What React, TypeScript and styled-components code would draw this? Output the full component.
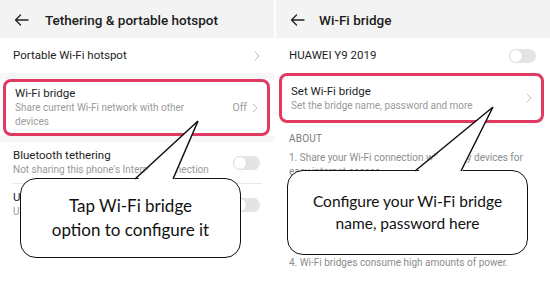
import React from "react";
import styled, { createGlobalStyle } from "styled-components";

const GlobalStyle = createGlobalStyle`
  html, body {
    margin: 0;
    padding: 0;
    background: #fff;
  }
  body {
    font-family: Roboto, "Liberation Sans", sans-serif;
    width: 550px;
    height: 284px;
    overflow: hidden;
  }
`;

const Screen = styled.div`
  display: flex;
  gap: 2px;
  width: 550px;
  height: 284px;
  background: #fff;
`;

const Panel = styled.div<{ width: number }>`
  position: relative;
  width: ${({ width }) => width}px;
  height: 284px;
  overflow: hidden;
  background: #fff;
  display: flex;
  flex-direction: column;
`;

const Header = styled.div<{ indent: number }>`
  height: 38px;
  flex-shrink: 0;
  display: flex;
  align-items: center;
  gap: ${({ indent }) => indent}px;
  padding: 2px 0 0 14px;
  box-sizing: border-box;
  background: #f3f3f3;
  font-size: 13.5px;
  font-weight: 500;
  color: #1c1c1c;
`;

const Row = styled.div<{ height: number }>`
  height: ${({ height }) => height}px;
  display: flex;
  align-items: center;
  justify-content: space-between;
  padding: 0 14px 0 13px;
  flex-shrink: 0;
`;

const Gap = styled.div<{ height: number }>`
  height: ${({ height }) => height}px;
  flex-shrink: 0;
  background: #f6f6f6;
`;

const Highlight = styled.div<{ height: number; side: number }>`
  height: ${({ height }) => height}px;
  margin: 0 ${({ side }) => side}px 0 3px;
  border: 3px solid #e13a62;
  border-radius: 8px;
  box-sizing: border-box;
  display: flex;
  align-items: center;
  justify-content: space-between;
  padding: 0 9px 0 9px;
  flex-shrink: 0;
  background: #fff;
`;

const Texts = styled.div<{ width?: number }>`
  display: flex;
  flex-direction: column;
  ${({ width }) => (width ? `width: ${width}px;` : "")}
`;

const Title = styled.div`
  font-size: 11.5px;
  color: #1e1e1e;
  line-height: 15px;
`;

const Sub = styled.div`
  font-size: 10px;
  color: #9a9a9a;
  line-height: 14px;
`;

const Value = styled.div`
  display: flex;
  align-items: center;
  gap: 5px;
  font-size: 10.5px;
  color: #9a9a9a;
`;

const Divider = styled.div`
  height: 1px;
  margin: 0 12px 0 13px;
  background: #e8e8e8;
  flex-shrink: 0;
`;

const Toggle = styled.div`
  width: 27px;
  height: 14px;
  border-radius: 7px;
  background: #e4e4e4;
  position: relative;
  flex-shrink: 0;
  &::after {
    content: "";
    position: absolute;
    left: 0;
    top: 0;
    width: 12px;
    height: 12px;
    border-radius: 50%;
    background: #fff;
    border: 1px solid #dcdcdc;
  }
`;

const SectionLabel = styled.div`
  font-size: 10px;
  color: #7a7a7a;
  padding: 10px 0 4px 13px;
  letter-spacing: 0.2px;
`;

const AboutList = styled.div`
  display: flex;
  flex-direction: column;
  gap: 7px;
  padding: 3px 14px 0 13px;
`;

const AboutItem = styled.div`
  font-size: 10px;
  color: #8c8c8c;
  line-height: 14px;
`;

const Callout = styled.div<{ left: number; top: number; w: number; h: number; size: number }>`
  position: absolute;
  left: ${({ left }) => left}px;
  top: ${({ top }) => top}px;
  width: ${({ w }) => w}px;
  height: ${({ h }) => h}px;
  box-sizing: border-box;
  border: 1.5px solid #111;
  border-radius: 16px;
  background: #fff;
  display: flex;
  align-items: center;
  justify-content: center;
  text-align: center;
  font-family: Lato, "Open Sans", sans-serif;
  font-size: ${({ size }) => size}px;
  line-height: 1.4;
  color: #111;
  z-index: 2;
`;

const Tail = styled.svg`
  position: absolute;
  left: 0;
  top: 0;
  width: 100%;
  height: 100%;
  pointer-events: none;
  z-index: 3;
`;

const Arrow = () => (
  <svg width="15" height="12" viewBox="0 0 15 12" fill="none">
    <path d="M14 6H1.5M6.5 1L1.5 6l5 5" stroke="#222" strokeWidth="1.3" strokeLinecap="round" strokeLinejoin="round" />
  </svg>
);

const Chevron = () => (
  <svg width="6" height="10" viewBox="0 0 6 10" fill="none">
    <path d="M1 1l4 4-4 4" stroke="#bdbdbd" strokeWidth="1" strokeLinecap="round" strokeLinejoin="round" />
  </svg>
);

const CalloutTail = ({ base1, base2, tip }: { base1: number[]; base2: number[]; tip: number[] }) => (
  <Tail viewBox="0 0 274 284">
    <polygon
      points={`${base1[0]},${base1[1] + 3} ${tip[0]},${tip[1]} ${base2[0]},${base2[1] + 3}`}
      fill="#fff"
    />
    <polyline
      points={`${base1[0]},${base1[1]} ${tip[0]},${tip[1]} ${base2[0]},${base2[1]}`}
      fill="none"
      stroke="#111"
      strokeWidth="1.5"
      strokeLinejoin="miter"
    />
  </Tail>
);

export default function App() {
  return (
    <>
      <GlobalStyle />
      <Screen>
        <Panel width={274}>
          <Header indent={16}>
            <Arrow />
            <span>Tethering &amp; portable hotspot</span>
          </Header>
          <Row height={35}>
            <Title>Portable Wi-Fi hotspot</Title>
            <Chevron />
          </Row>
          <Gap height={6} />
          <Highlight height={57} side={4}>
            <Texts width={180}>
              <Title>Wi-Fi bridge</Title>
              <Sub>Share current Wi-Fi network with other devices</Sub>
            </Texts>
            <Value>
              Off <Chevron />
            </Value>
          </Highlight>
          <Gap height={6} />
          <Row height={41}>
            <Texts>
              <Title>Bluetooth tethering</Title>
              <Sub>Not sharing this phone's Internet connection</Sub>
            </Texts>
            <Toggle />
          </Row>
          <Divider />
          <Row height={41}>
            <Texts>
              <Title>USB tethering</Title>
              <Sub>USB not connected</Sub>
            </Texts>
            <Toggle />
          </Row>
          <CalloutTail base1={[135, 179]} base2={[173, 179]} tip={[198, 121]} />
          <Callout left={20} top={178} w={221} h={80} size={17}>
            Tap Wi-Fi bridge
            <br />
            option to configure it
          </Callout>
        </Panel>
        <Panel width={274}>
          <Header indent={14}>
            <Arrow />
            <span>Wi-Fi bridge</span>
          </Header>
          <Row height={35}>
            <Title>HUAWEI Y9 2019</Title>
            <Toggle />
          </Row>
          <Highlight height={50} side={6}>
            <Texts>
              <Title>Set Wi-Fi bridge</Title>
              <Sub>Set the bridge name, password and more</Sub>
            </Texts>
            <Chevron />
          </Highlight>
          <SectionLabel>ABOUT</SectionLabel>
          <AboutList>
            <AboutItem>
              1. Share your Wi-Fi connection with many devices for easy internet access.
            </AboutItem>
            <AboutItem>
              2. Wi-Fi bridge will be turned off when Wi-Fi is disconnected.
            </AboutItem>
            <AboutItem>
              3. Devices connected to the bridge share the same network speed.
            </AboutItem>
            <AboutItem>4. Wi-Fi bridges consume high amounts of power.</AboutItem>
          </AboutList>
          <CalloutTail base1={[139, 171]} base2={[185, 171]} tip={[217, 107]} />
          <Callout left={11} top={170} w={241} h={85} size={15.5}>
            Configure your Wi-Fi bridge
            <br />
            name, password here
          </Callout>
        </Panel>
      </Screen>
    </>
  );
}
